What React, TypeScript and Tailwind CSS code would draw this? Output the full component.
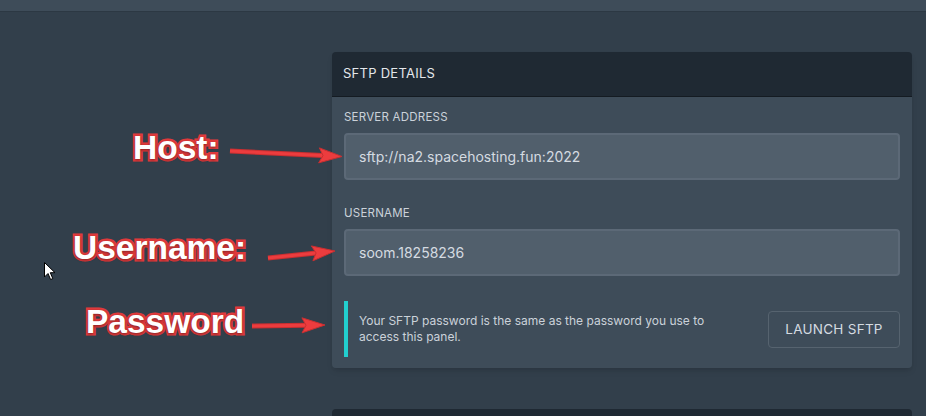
import React from "react";

const Field = ({ label, value }: { label: string; value: string }) => (
  <div>
    <label className="block text-[11.5px] leading-4 uppercase text-[#cbd2d9] tracking-[0.02em] mb-2">
      {label}
    </label>
    <div className="h-[47px] flex items-center px-[13px] rounded bg-[#515f6c] border-2 border-[#5c6977] text-[14px] text-[#d5dbe1]">
      {value}
    </div>
  </div>
);

const Callout = ({ text, className }: { text: string; className: string }) => (
  <div
    className={`absolute text-[33.5px] leading-none font-bold text-white [paint-order:stroke_fill] [-webkit-text-stroke:5px_#e23a3c] [text-shadow:0_1px_3px_rgba(0,0,0,0.45)] ${className}`}
    style={{ fontFamily: '"Liberation Sans", Arial, sans-serif' }}
  >
    {text}
  </div>
);

const Arrow = ({ x1, y1, x2, y2 }: { x1: number; y1: number; x2: number; y2: number }) => {
  const len = Math.hypot(x2 - x1, y2 - y1);
  const dx = (x2 - x1) / len;
  const dy = (y2 - y1) / len;
  const bx = x2 - 23 * dx;
  const by = y2 - 23 * dy;
  const nx = bx + 4 * dx;
  const ny = by + 4 * dy;
  const px = -dy;
  const py = dx;
  const pts = [
    [x2, y2],
    [bx + 7.5 * px, by + 7.5 * py],
    [nx, ny],
    [bx - 7.5 * px, by - 7.5 * py],
  ]
    .map((p) => p.join(","))
    .join(" ");
  return (
    <g>
      <line x1={x1} y1={y1} x2={nx} y2={ny} stroke="#c92f31" strokeWidth="5" />
      <line x1={x1} y1={y1} x2={nx} y2={ny} stroke="#ec3c3e" strokeWidth="3" />
      <polygon points={pts} fill="#ec3c3e" stroke="#c92f31" strokeWidth="1" strokeLinejoin="round" />
    </g>
  );
};

export default function App() {
  return (
    <div
      className="relative min-h-[416px] h-[416px] overflow-hidden bg-[#323f4b]"
      style={{ fontFamily: "Inter, 'Open Sans', sans-serif" }}
    >
      <div className="h-[12px] bg-[#3e4c59] border-b border-[#2c3843]" />

      <div className="flex pt-[40px]">
        <div className="w-[332px] shrink-0" />
        <div className="w-[580px] flex flex-col">
          <div className="rounded shadow-md overflow-hidden">
            <div className="h-[45px] flex items-center px-[11px] bg-[#1f2933] border-b border-[#141b22] text-[13px] tracking-[0.02em] uppercase text-[#e4e7eb]">
              SFTP Details
            </div>
            <div className="bg-[#3e4c59] px-3 pt-3 pb-[11px]">
              <Field label="Server Address" value="sftp://na2.spacehosting.fun:2022" />
              <div className="mt-[25px]">
                <Field label="Username" value="soom.18258236" />
              </div>
              <div className="mt-[25px] flex items-center justify-between">
                <div className="flex items-center h-[56px] border-l-4 border-[#22cfcf] pl-[11px]">
                  <p className="text-[12px] leading-4 text-[#cbd2d9] w-[360px]">
                    Your SFTP password is the same as the password you use to access this panel.
                  </p>
                </div>
                <button className="h-[37px] w-[132px] rounded border border-[#56636f] text-[13.5px] tracking-[0.02em] uppercase text-[#d5dbe1]">
                  Launch SFTP
                </button>
              </div>
            </div>
          </div>
          <div className="mt-[41px] h-[60px] rounded-t bg-[#1f2933]" />
        </div>
      </div>

      <Callout text="Host:" className="left-[133px] top-[131px]" />
      <Callout text="Username:" className="left-[73px] top-[231px]" />
      <Callout text="Password" className="left-[86px] top-[305px]" />

      <svg className="absolute inset-0 pointer-events-none" width="926" height="416">
        <Arrow x1={230} y1={151} x2={342} y2={156.5} />
        <Arrow x1={268} y1={258} x2={335} y2={251} />
        <Arrow x1={252} y1={326} x2={325} y2={325} />
        <path
          d="M44.5 262.5 L44.5 277 L48 273.5 L50.6 279.5 L52.8 278.6 L50.3 272.7 L55 272.7 Z"
          fill="#fff"
          stroke="#000"
          strokeWidth="1"
        />
      </svg>
    </div>
  );
}
